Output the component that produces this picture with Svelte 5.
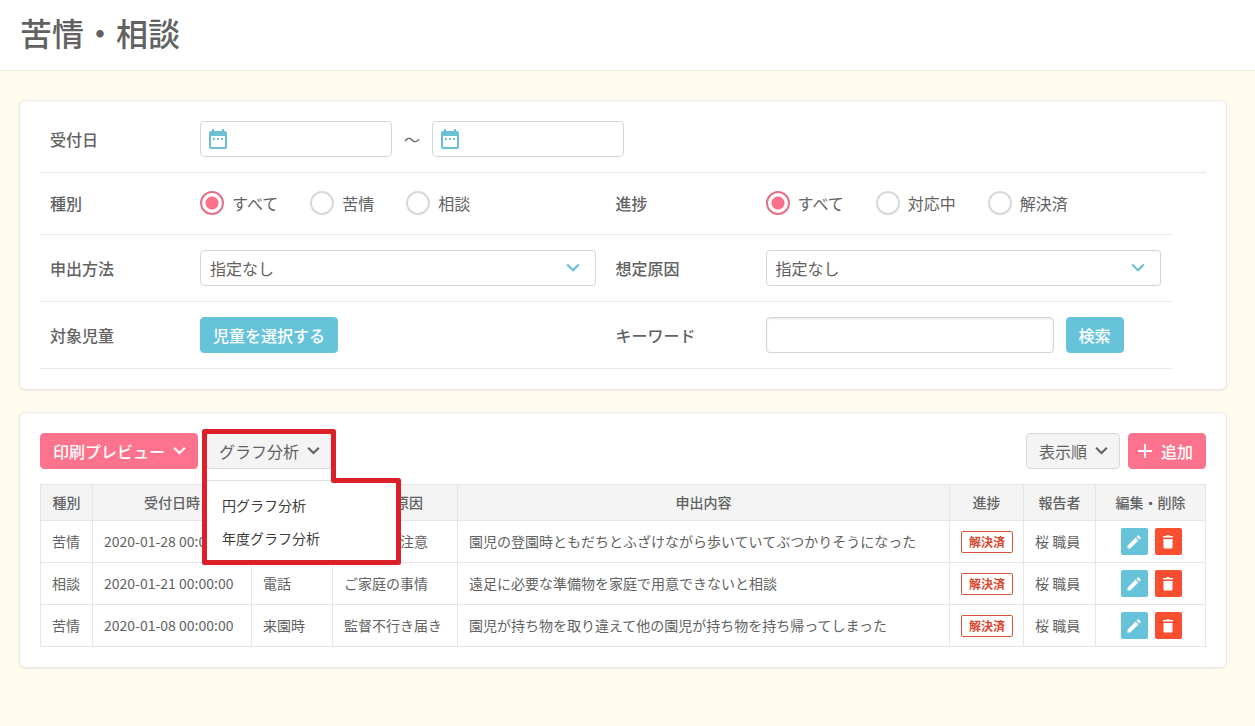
<script lang="ts">
    interface Complaint {
        type: string;
        date: string;
        method: string;
        cause: string;
        content: string;
        status: string;
        reporter: string;
    }

    const types = ["すべて", "苦情", "相談"];
    const statuses = ["すべて", "対応中", "解決済"];
    const headings = ["種別", "受付日時", "申出方法", "想定原因", "申出内容", "進捗", "報告者", "編集・削除"];

    const complaints: Complaint[] = [
        {
            type: "苦情",
            date: "2020-01-28 00:00:00",
            method: "来園時",
            cause: "職員の不注意",
            content: "園児の登園時ともだちとふざけながら歩いていてぶつかりそうになった",
            status: "解決済",
            reporter: "桜 職員",
        },
        {
            type: "相談",
            date: "2020-01-21 00:00:00",
            method: "電話",
            cause: "ご家庭の事情",
            content: "遠足に必要な準備物を家庭で用意できないと相談",
            status: "解決済",
            reporter: "桜 職員",
        },
        {
            type: "苦情",
            date: "2020-01-08 00:00:00",
            method: "来園時",
            cause: "監督不行き届き",
            content: "園児が持ち物を取り違えて他の園児が持ち物を持ち帰ってしまった",
            status: "解決済",
            reporter: "桜 職員",
        },
    ];

    let type = $state("すべて");
    let status = $state("すべて");
    let menuOpen = $state(true);
</script>

{#snippet chevron()}
    <svg class="chevron" viewBox="0 0 14 10" aria-hidden="true">
        <path d="M1.200 1.500 7 7.200l5.800-5.700" fill="none" stroke="currentColor" stroke-width="2.200" />
    </svg>
{/snippet}

{#snippet dateField(id: string, label: string)}
    <div class="date">
        <svg viewBox="0 0 18 20" aria-hidden="true">
            <path
                fill="currentColor"
                fill-rule="evenodd"
                d="M3 0h2v2h8V0h2v2h1a2 2 0 0 1 2 2v14a2 2 0 0 1-2 2H2a2 2 0 0 1-2-2V4a2 2 0 0 1 2-2h1ZM2 7v11h14V7ZM4 9h2v2H4Zm4 0h2v2H8Zm4 0h2v2h-2Z"
            />
        </svg>
        <input {id} type="text" aria-label={label} />
    </div>
{/snippet}

<header>
    <h1>苦情・相談</h1>
</header>

<main>
    <form class="card search" onsubmit={(e) => e.preventDefault()}>
        <div class="row">
            <label class="name" for="date-from">受付日</label>
            <div class="field">
                {@render dateField("date-from", "受付日（開始）")}
                <span>〜</span>
                {@render dateField("date-to", "受付日（終了）")}
            </div>
        </div>

        <div class="pair short">
            <div class="row" role="radiogroup" aria-labelledby="type-name">
                <span class="name" id="type-name">種別</span>
                <div class="field radios">
                    {#each types as option}
                        <label>
                            <input type="radio" name="type" value={option} bind:group={type} />
                            {option}
                        </label>
                    {/each}
                </div>
            </div>
            <div class="row" role="radiogroup" aria-labelledby="status-name">
                <span class="name" id="status-name">進捗</span>
                <div class="field radios">
                    {#each statuses as option}
                        <label>
                            <input type="radio" name="status" value={option} bind:group={status} />
                            {option}
                        </label>
                    {/each}
                </div>
            </div>
        </div>

        <div class="pair">
            <div class="row">
                <label class="name" for="method">申出方法</label>
                <div class="field select">
                    <select id="method"><option>指定なし</option></select>
                    {@render chevron()}
                </div>
            </div>
            <div class="row">
                <label class="name" for="cause">想定原因</label>
                <div class="field select">
                    <select id="cause"><option>指定なし</option></select>
                    {@render chevron()}
                </div>
            </div>
        </div>

        <div class="pair">
            <div class="row">
                <span class="name">対象児童</span>
                <div class="field">
                    <button class="btn blue" type="button">児童を選択する</button>
                </div>
            </div>
            <div class="row">
                <label class="name" for="keyword">キーワード</label>
                <div class="field">
                    <input class="keyword" id="keyword" type="text" />
                    <button class="btn blue" type="submit">検索</button>
                </div>
            </div>
        </div>
    </form>

    <section class="card list">
        <div class="toolbar">
            <button class="btn pink">印刷プレビュー {@render chevron()}</button>
            <div class="dropdown">
                <button class="btn" aria-expanded={menuOpen} onclick={() => (menuOpen = !menuOpen)}>
                    グラフ分析 {@render chevron()}
                </button>
                {#if menuOpen}
                    <div class="menu">
                        <a href="#pie">円グラフ分析</a>
                        <a href="#year">年度グラフ分析</a>
                    </div>
                    <svg class="marker" viewBox="0 0 199 136" aria-hidden="true">
                        <path
                            d="M2.500 2.500H131.500V51.500H196.500V133.500H2.500Z"
                            fill="none"
                            stroke="#dc2029"
                            stroke-width="5"
                            stroke-linejoin="round"
                        />
                    </svg>
                {/if}
            </div>
            <button class="btn sort">表示順 {@render chevron()}</button>
            <button class="btn pink add">
                <svg class="plus" viewBox="0 0 16 16" aria-hidden="true">
                    <path d="M8 1v14M1 8h14" stroke="currentColor" stroke-width="2" />
                </svg>
                追加
            </button>
        </div>

        <table>
            <colgroup>
                <col class="w-type" />
                <col class="w-date" />
                <col class="w-method" />
                <col class="w-cause" />
                <col />
                <col class="w-status" />
                <col class="w-reporter" />
                <col class="w-actions" />
            </colgroup>
            <thead>
                <tr>
                    {#each headings as heading}
                        <th scope="col">{heading}</th>
                    {/each}
                </tr>
            </thead>
            <tbody>
                {#each complaints as item}
                    <tr>
                        <td>{item.type}</td>
                        <td>{item.date}</td>
                        <td>{item.method}</td>
                        <td>{item.cause}</td>
                        <td>{item.content}</td>
                        <td><span class="badge">{item.status}</span></td>
                        <td>{item.reporter}</td>
                        <td>
                            <div class="actions">
                                <button class="icon edit" aria-label="編集">
                                    <svg viewBox="0 0 14 14" aria-hidden="true">
                                        <path fill="currentColor" d="M.5 13.500v-2.800L8.600 2.600l2.800 2.800-8.100 8.100ZM9.500 1.700 10.700.500q.5-.5 1 0l1.800 1.800q.5.500 0 1L12.300 4.500Z" />
                                    </svg>
                                </button>
                                <button class="icon delete" aria-label="削除">
                                    <svg viewBox="0 0 14 14" aria-hidden="true">
                                        <path fill="currentColor" d="M2 1h3l1-1h2l1 1h3v1.500H2ZM2.500 4h9v8q0 1.500-1.500 1.500H4q-1.500 0-1.500-1.500Z" />
                                    </svg>
                                </button>
                            </div>
                        </td>
                    </tr>
                {/each}
            </tbody>
        </table>
    </section>
</main>

<style>
    :global(body) {
        background: #fffbee;
        color: #626262;
        font: 16px/24px "Noto Sans CJK JP", sans-serif;
        margin: 0;
    }

    * {
        box-sizing: border-box;
    }

    button,
    input,
    select {
        color: inherit;
        font: inherit;
        margin: 0;
    }

    button {
        cursor: pointer;
    }

    header {
        background: #fff;
        border-bottom: 1px solid #ebe9e2;
        padding: 8px 20px 14px;
    }

    h1 {
        font-size: 32px;
        font-weight: 500;
        line-height: 48px;
        margin: 0;
    }

    main {
        display: flex;
        flex-direction: column;
        gap: 22px;
        padding: 29px 28px 20px 19px;
    }

    .card {
        background: #fff;
        border: 1px solid #ece8de;
        border-radius: 6px;
        box-shadow: 0 1px 2px rgba(0, 0, 0, 0.06);
        padding: 20px;
    }

    .search {
        padding-top: 5px;
    }

    .row {
        align-items: center;
        border-bottom: 1px solid #e8e8e8;
        display: flex;
        height: 67px;
        padding: 0 10px;
    }

    .pair {
        display: grid;
        grid-template-columns: 1fr 1fr;
        width: 97%;
    }

    .short .row {
        height: 62px;
        padding-bottom: 2px;
    }

    .name {
        flex: 0 0 150px;
        font-weight: 500;
    }

    .field {
        align-items: center;
        display: flex;
        flex: 1;
        gap: 12px;
    }

    .date {
        position: relative;

        & svg {
            color: #6bc0d3;
            height: 20px;
            left: 9px;
            position: absolute;
            top: 8px;
            width: 18px;
        }
    }

    input[type="text"],
    select {
        background: #fff;
        border: 1px solid #d5d5d8;
        border-radius: 4px;
        display: block;
        height: 36px;
        padding: 0 9px;
    }

    .date input {
        padding-left: 36px;
        width: 192px;
    }

    input.keyword {
        box-shadow: inset 0 1px 2px rgba(0, 0, 0, 0.1);
        width: 288px;
    }

    .select {
        position: relative;

        & select {
            appearance: none;
            width: 100%;
        }

        & .chevron {
            color: #6bc0d3;
            pointer-events: none;
            position: absolute;
            right: 16px;
        }
    }

    .radios {
        gap: 32px;

        & label {
            align-items: center;
            display: flex;
            gap: 8px;
        }
    }

    input[type="radio"] {
        appearance: none;
        border: 2px solid #d8d8d8;
        border-radius: 50%;
        height: 24px;
        width: 24px;

        &:checked {
            background: radial-gradient(circle, #fb7189 6px, #fff 7px);
            border-color: #e2718a;
        }
    }

    .chevron {
        height: 10px;
        width: 14px;
    }

    .btn {
        align-items: center;
        background: #f4f4f4;
        border: 1px solid #d8d8d8;
        border-radius: 4px;
        display: flex;
        gap: 8px;
        height: 36px;
        padding: 0 11px 0 12px;
        white-space: nowrap;

        & .chevron {
            width: 13px;
        }
    }

    .blue {
        background: #67c3da;
        border-color: #67c3da;
        color: #fff;
        font-weight: 500;
        padding: 0 12px;
    }

    .pink {
        background: #fd738d;
        border-color: #fd738d;
        color: #fff;
        font-weight: 500;
    }

    .toolbar {
        display: flex;
        gap: 8px;
        margin-bottom: 15px;
    }

    .sort {
        margin-left: auto;
    }

    .add {
        padding: 0 12px 0 8px;
    }

    .plus {
        height: 16px;
        width: 16px;
    }

    .dropdown {
        position: relative;
    }

    .menu {
        background: #fff;
        border: 1px solid #e0e0e0;
        color: #3a3a3a;
        font-size: 14px;
        left: 0;
        line-height: 33px;
        padding: 8px 0;
        position: absolute;
        top: 47px;
        width: 192px;
        z-index: 1;

        & a {
            color: inherit;
            display: block;
            padding: 0 15px;
            text-decoration: none;
        }
    }

    .marker {
        height: 136px;
        left: -4px;
        pointer-events: none;
        position: absolute;
        top: -4px;
        width: 199px;
        z-index: 2;
    }

    table {
        border-collapse: collapse;
        font-size: 14px;
        line-height: 21px;
        table-layout: fixed;
        width: 100%;
    }

    th,
    td {
        border: 1px solid #e6e6e6;
        height: 42px;
        padding: 0 10px 0 11px;
        text-align: left;
        white-space: nowrap;
    }

    th {
        background: #f4f4f4;
        font-weight: 500;
        height: 36px;
        padding: 0;
        text-align: center;
    }

    .w-type {
        width: 52px;
    }

    .w-date {
        width: 159px;
    }

    .w-method {
        width: 81px;
    }

    .w-cause {
        width: 125px;
    }

    .w-status {
        width: 74px;
    }

    .w-reporter {
        width: 72px;
    }

    .w-actions {
        width: 110px;
    }

    .badge {
        border: 1px solid #d9533c;
        border-radius: 2px;
        color: #d9472e;
        display: block;
        font-size: 12px;
        font-weight: 700;
        line-height: 20px;
        text-align: center;
    }

    .actions {
        display: flex;
        gap: 7px;
        justify-content: center;
    }

    .icon {
        align-items: center;
        border: none;
        border-radius: 2px;
        color: #fff;
        display: flex;
        height: 27px;
        justify-content: center;
        padding: 0;
        width: 27px;

        & svg {
            height: 14px;
            width: 14px;
        }
    }

    .edit {
        background: #67c3da;
    }

    .delete {
        background: #f94e30;
    }
</style>
